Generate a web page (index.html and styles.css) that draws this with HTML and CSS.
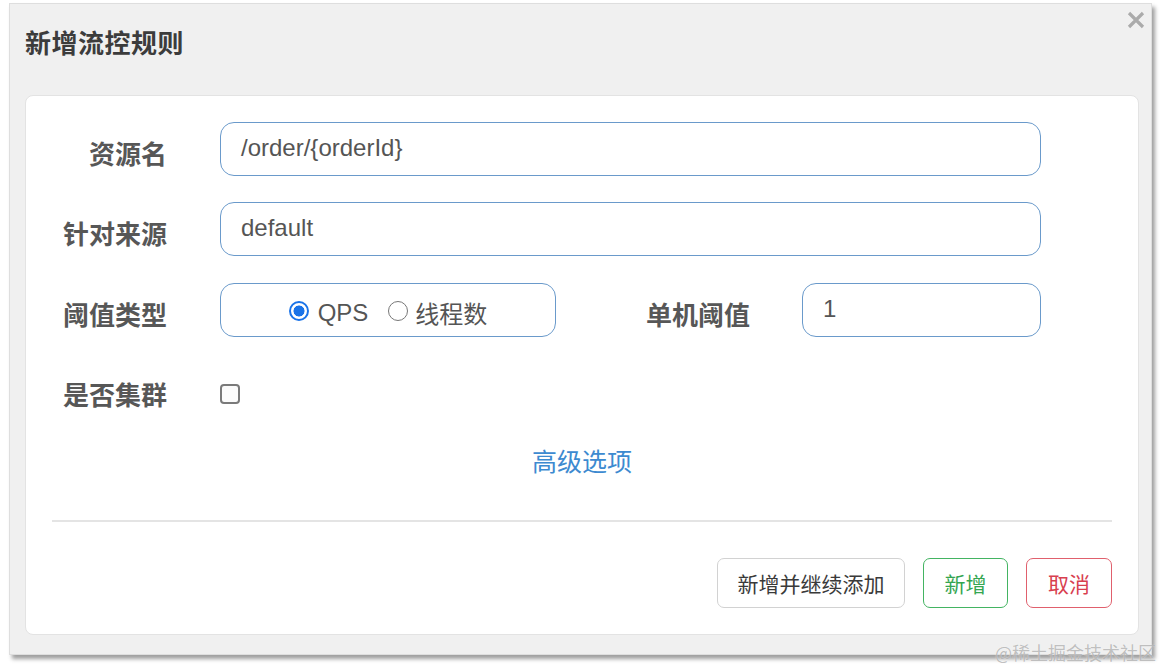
FILE: index.html
```html
<!DOCTYPE html>
<html lang="zh-CN">
<head>
<meta charset="utf-8">
<title>新增流控规则</title>
<link rel="stylesheet" href="styles.css">
</head>
<body>
<div class="dialog">
  <div class="dialog-header">
    <h3 class="dialog-title">新增流控规则</h3>
    <button class="close-btn" aria-label="close">
      <svg width="18" height="18" viewBox="0 0 18 18"><path d="M2 2 L16 16 M16 2 L2 16" stroke="#ababab" stroke-width="3.2" stroke-linecap="butt" fill="none"/></svg>
    </button>
  </div>
  <div class="panel">
    <div class="form-row">
      <label class="form-label">资源名</label>
      <div class="input wide">/order/{orderId}</div>
    </div>
    <div class="form-row">
      <label class="form-label">针对来源</label>
      <div class="input wide">default</div>
    </div>
    <div class="form-row">
      <label class="form-label">阈值类型</label>
      <div class="radio-box">
        <span class="radio checked"></span><span class="radio-text latin">QPS</span>
        <span class="radio"></span><span class="radio-text">线程数</span>
      </div>
      <label class="form-label second">单机阈值</label>
      <div class="input small">1</div>
    </div>
    <div class="form-row check-row">
      <label class="form-label">是否集群</label>
      <span class="checkbox"></span>
    </div>
    <div class="advanced">高级选项</div>
    <div class="divider"></div>
    <div class="footer">
      <button class="btn btn-default">新增并继续添加</button>
      <button class="btn btn-success">新增</button>
      <button class="btn btn-danger">取消</button>
    </div>
  </div>
</div>
<div class="watermark">@稀土掘金技术社区</div>
</body>
</html>
```
FILE: styles.css
```css
* { box-sizing: border-box; }
html, body { margin: 0; padding: 0; }
body {
  background: #ffffff;
  width: 1162px;
  height: 670px;
  position: relative;
  overflow: hidden;
  font-family: "Liberation Sans", "Noto Sans CJK SC", sans-serif;
  padding-top: 3px;
  padding-left: 9px;
}
.dialog {
  position: relative;
  width: 1143px;
  background: #f0f0f0;
  border: 1px solid #dedede;
  padding: 0 12px 19px 15px;
  box-shadow: 3px 4px 4px rgba(0, 0, 0, 0.38);
}
.dialog-header {
  height: 91px;
  padding-top: 23px;
  padding-left: 0;
}
.dialog-title {
  margin: 0;
  font-family: "Noto Sans CJK SC", sans-serif;
  font-size: 26px;
  line-height: 30px;
  font-weight: 700;
  color: #3c3c3c;
  letter-spacing: 0.5px;
}
.close-btn {
  position: absolute;
  top: 7px;
  right: 6px;
  border: 0;
  background: transparent;
  padding: 0;
  width: 18px;
  height: 18px;
  display: block;
}
.close-btn svg { display: block; }
.panel {
  background: #ffffff;
  border: 1px solid #e3e3e3;
  border-radius: 8px;
  padding: 26px 26px 26px 26px;
}
.form-row {
  display: flex;
  align-items: center;
  height: 54px;
  margin-bottom: 26px;
}
.form-row:nth-child(2) { margin-bottom: 27px; }
.form-label {
  width: 115px;
  flex: none;
  text-align: right;
  font-family: "Noto Sans CJK SC", sans-serif;
  font-weight: 700;
  font-size: 26px;
  line-height: 30px;
  color: #575757;
  padding-top: 8px;
  margin-right: 53px;
}
.form-label.second {
  width: 194px;
  margin-right: 52px;
}
.input {
  height: 54px;
  border: 1.6px solid #6a9acb;
  border-radius: 14px;
  padding: 0 20px;
  font-size: 24px;
  line-height: 49px;
  color: #555555;
  background: #fff;
}
.input.wide { width: 821px; }
.input.small { width: 239px; padding-bottom: 4px; }
.radio-box {
  width: 336px;
  height: 54px;
  border: 1.6px solid #6a9acb;
  border-radius: 14px;
  display: flex;
  align-items: center;
  justify-content: center;
  padding-top: 5px;
}
.radio {
  width: 20px;
  height: 20px;
  border-radius: 50%;
  border: 1.6px solid #777;
  background: #fff;
  flex: none;
  margin-bottom: 4px;
}
.radio.checked {
  border: 2px solid #1a73e8;
  background: radial-gradient(circle, #1a73e8 0 5.2px, #ffffff 5.8px);
}
.radio-text {
  font-size: 24px;
  color: #555;
  margin-left: 9px;
  margin-right: 20px;
  font-family: "Noto Sans CJK SC", sans-serif;
  line-height: 30px;
}
.radio-text.latin {
  font-family: "Liberation Sans", sans-serif;
}
.radio-text:last-child { margin-right: 0; margin-left: 7px; }
.check-row { height: 54px; margin-bottom: 28px; }
.checkbox {
  width: 20px;
  height: 20px;
  border: 2px solid #7a7a7a;
  border-radius: 4px;
  background: #fbfbfb;
  margin-top: 8px;
}
.advanced {
  text-align: center;
  font-family: "Noto Sans CJK SC", sans-serif;
  font-size: 25px;
  line-height: 30px;
  color: #3d8ad0;
}
.divider {
  height: 2px;
  background: #e4e4e4;
  margin-top: 45px;
}
.footer {
  display: flex;
  justify-content: flex-end;
  gap: 18px;
  margin-top: 36px;
}
.btn {
  height: 50px;
  border-radius: 7px;
  background: #fff;
  font-family: "Noto Sans CJK SC", sans-serif;
  font-size: 21px;
  padding: 0;
  cursor: pointer;
}
.btn-default {
  width: 188px;
  border: 1.5px solid #d2d2d2;
  color: #3a3a3a;
}
.btn-success {
  width: 85px;
  border: 1.5px solid #43b462;
  color: #34a651;
}
.btn-danger {
  width: 86px;
  border: 1.5px solid #e0606d;
  color: #d8404f;
}
.watermark {
  position: absolute;
  left: 995px;
  top: 641px;
  white-space: nowrap;
  font-family: "Noto Sans CJK SC", serif;
  font-size: 18px;
  line-height: 22px;
  color: rgba(140, 140, 140, 0.55);
  text-shadow: 0 0 1px rgba(255,255,255,0.8);
}
```
